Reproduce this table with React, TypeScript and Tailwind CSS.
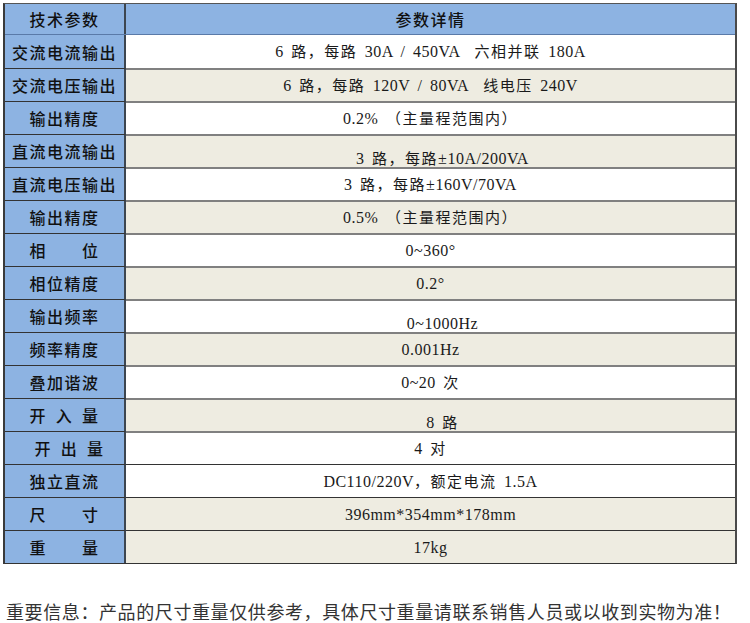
import React from "react";

type Row = {
  label: React.ReactNode;
  value: string;
  beige: boolean;
  bottom?: boolean;
  dark?: boolean;
};

const SANS = { fontFamily: "'Noto Sans CJK SC', 'Noto Sans', sans-serif" };
const SERIF = { fontFamily: "'Liberation Serif', 'Noto Sans CJK SC', serif" };

function Spread({ chars, shift }: { chars: string[]; shift?: boolean }) {
  return (
    <div className={`flex w-[70px] justify-between ${shift ? "ml-[10px]" : ""}`}>
      {chars.map((c, i) => (
        <span key={i}>{c}</span>
      ))}
    </div>
  );
}

function Value({ text }: { text: string }) {
  const parts = text.split(/([\u3000-\u9fff\uff00-\uffef]+)/).filter((p) => p.length > 0);
  return (
    <span className="whitespace-pre">
      {parts.map((p, i) =>
        /[\u3000-\u9fff\uff00-\uffef]/.test(p) ? (
          <span key={i} className="text-[15px] tracking-[1.5px]" style={SANS}>
            {p}
          </span>
        ) : (
          <span key={i} className="text-[16px] tracking-[0.5px] [word-spacing:3px]" style={SERIF}>
            {p}
          </span>
        )
      )}
    </span>
  );
}

const rows: Row[] = [
  { label: "交流电流输出", value: "6 路，每路 30A / 450VA  六相并联 180A", beige: false },
  { label: "交流电压输出", value: "6 路，每路 120V / 80VA  线电压 240V", beige: true },
  { label: "输出精度", value: "0.2% （主量程范围内）", beige: false },
  { label: "直流电流输出", value: "3 路，每路±10A/200VA", beige: true, bottom: true },
  { label: "直流电压输出", value: "3 路，每路±160V/70VA", beige: false },
  { label: "输出精度", value: "0.5% （主量程范围内）", beige: true },
  { label: <Spread chars={["相", "位"]} />, value: "0~360°", beige: false },
  { label: "相位精度", value: "0.2°", beige: true },
  { label: "输出频率", value: "0~1000Hz", beige: false, bottom: true },
  { label: "频率精度", value: "0.001Hz", beige: true },
  { label: "叠加谐波", value: "0~20 次", beige: false },
  { label: <Spread chars={["开", "入", "量"]} />, value: "8 路", beige: true, bottom: true },
  { label: <Spread chars={["开", "出", "量"]} shift />, value: "4 对", beige: false },
  { label: "独立直流", value: "DC110/220V，额定电流 1.5A", beige: false, dark: true },
  { label: <Spread chars={["尺", "寸"]} />, value: "396mm*354mm*178mm", beige: true, dark: true },
  { label: <Spread chars={["重", "量"]} />, value: "17kg", beige: true, dark: true },
];

export default function App() {
  return (
    <div className="w-[750px] h-[623px] bg-white overflow-hidden">
      <div className="ml-[3px] mt-[3px] w-[734px] border-l-2 border-t border-r-2 border-b border-l-[#3a3a3a] border-t-[#555] border-r-[#4a4a4a] border-b-[#333]">
        <div className="flex h-[31px] bg-[#8db3e2] border-b border-[#5a7aa8]">
          <div
            className="w-[121px] flex items-center justify-center border-r-2 border-[#3d4650] text-[16px] font-medium text-[#111] tracking-[1.5px]"
            style={SANS}
          >
            技术参数
          </div>
          <div
            className="flex-1 flex items-center justify-center text-[16px] font-medium text-[#111] tracking-[1.5px]"
            style={SANS}
          >
            参数详情
          </div>
        </div>
        {rows.map((r, i) => (
          <div key={i} className="flex h-[33px]">
            <div
              className={`w-[121px] flex items-center justify-center bg-[#8db3e2] border-r-2 border-[#3d4650] text-[16px] font-medium text-[#111] tracking-[1.5px] ${
                i === 0 ? "" : "border-t border-t-[#333]"
              }`}
              style={SANS}
            >
              {r.label}
            </div>
            <div
              className={`flex-1 flex justify-center text-[#1a1a1a] ${
                r.beige ? "bg-[#eeece1]" : "bg-white"
              } ${r.bottom ? "items-end pl-[24px] leading-[16px]" : "items-center leading-[20px]"} ${
                i === 0 ? "" : r.dark ? "border-t border-t-[#333]" : "border-t-2 border-t-[#808080]"
              }`}
            >
              <Value text={r.value} />
            </div>
          </div>
        ))}
      </div>
      <div
        className="mt-[37px] pl-[6px] text-[18px] leading-[20px] tracking-[0.6px] text-[#333] whitespace-nowrap"
        style={SANS}
      >
        重要信息：产品的尺寸重量仅供参考，具体尺寸重量请联系销售人员或以收到实物为准！
      </div>
    </div>
  );
}
